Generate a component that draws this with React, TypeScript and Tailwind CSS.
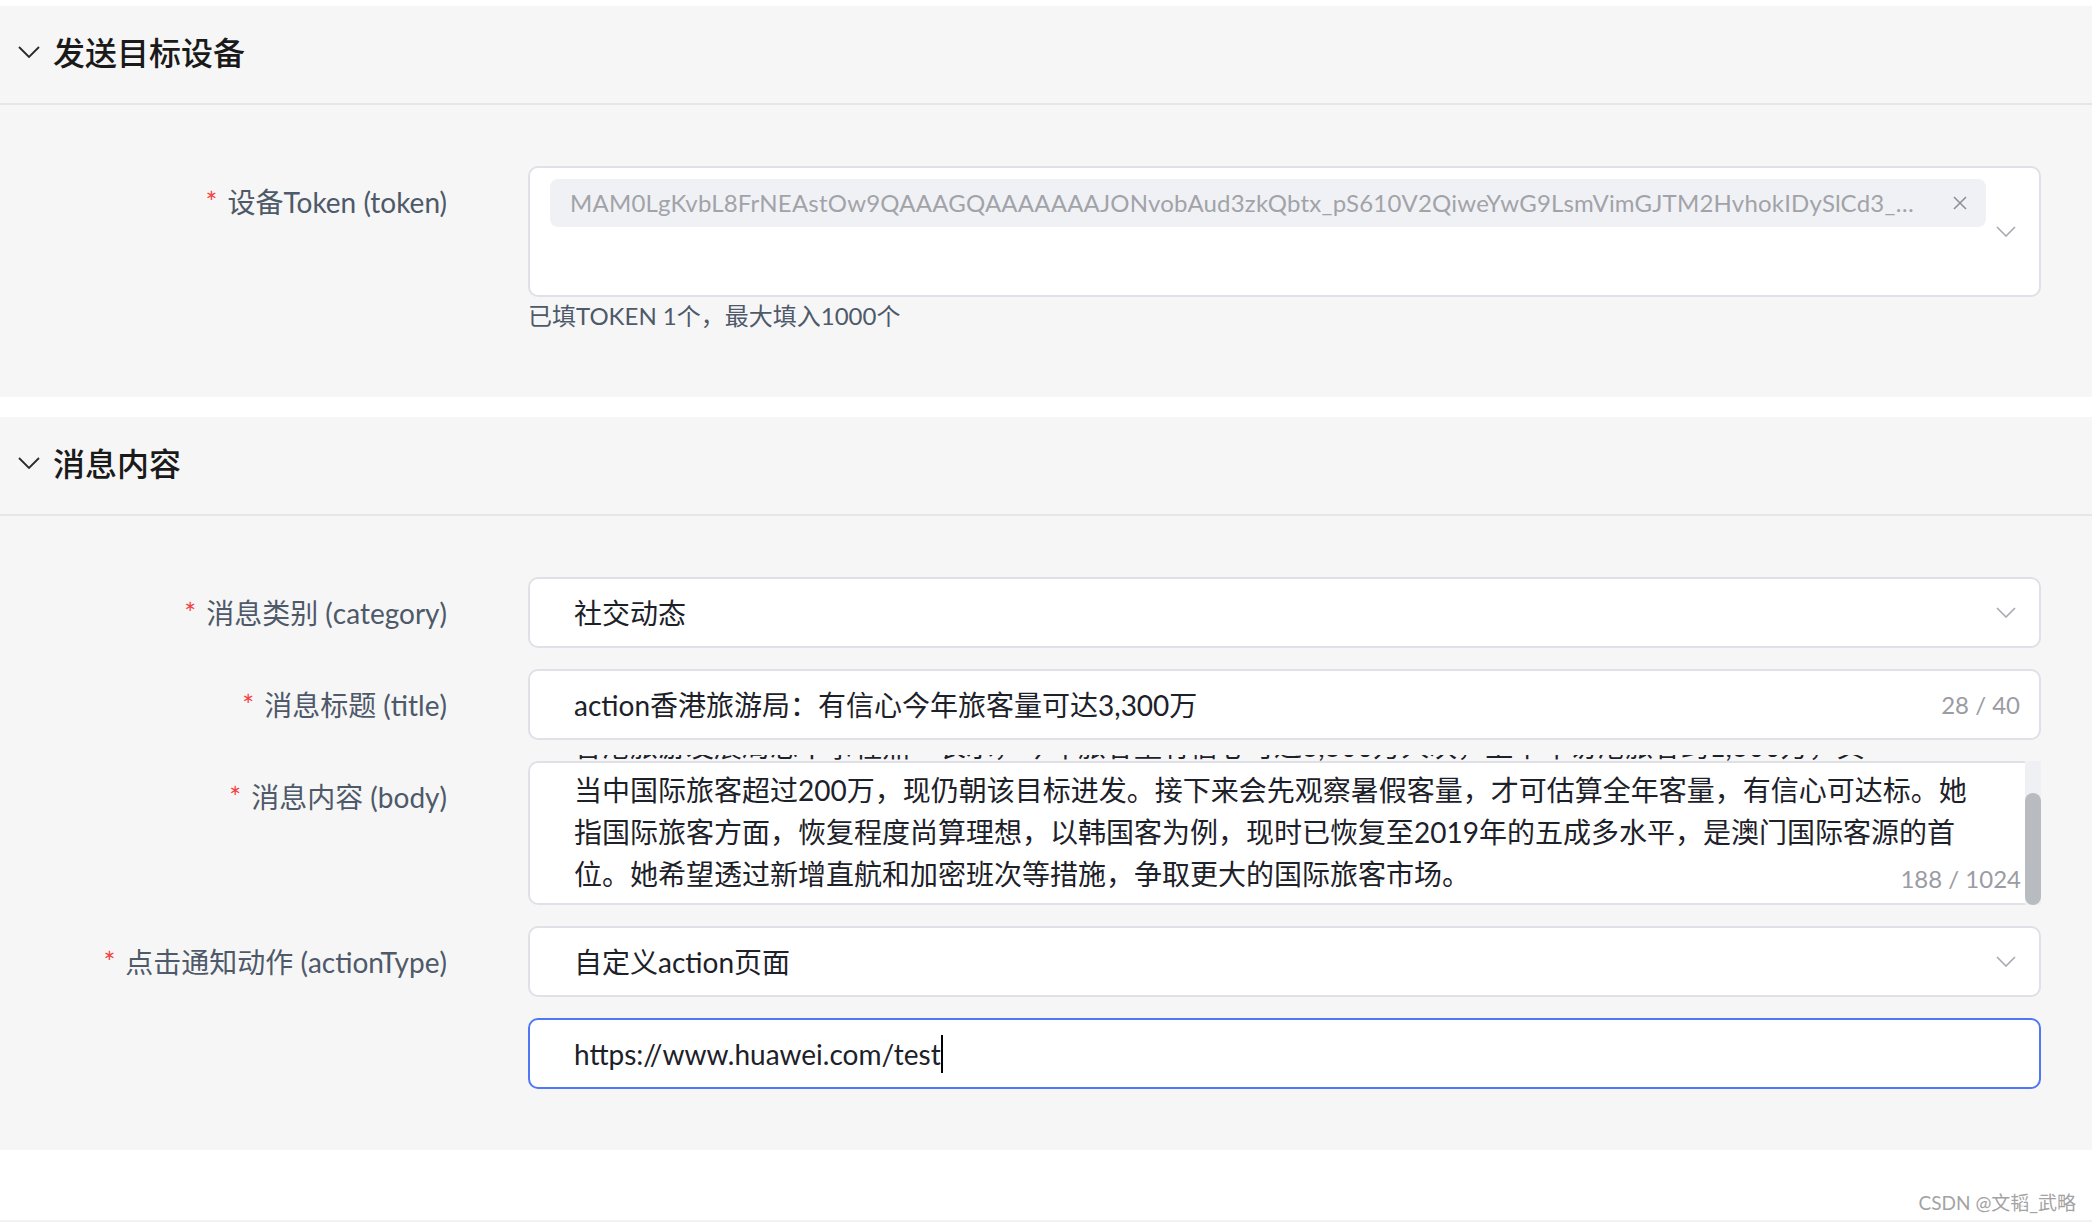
import React from 'react';

const FONT = "font-['Lato','Noto_Sans_CJK_SC',sans-serif]";

const TOKEN =
  'MAM0LgKvbL8FrNEAstOw9QAAAGQAAAAAAAJONvobAud3zkQbtx_pS610V2QiweYwG9LsmVimGJTM2HvhokIDySlCd3_nEoR5wq8TyUhKzP1aXcVb7GmD';

// small down arrow used by selects
const Chevron = ({ className = '' }: { className?: string }) => (
  <svg viewBox="0 0 20 11" className={`w-[20px] h-[11px] shrink-0 ${className}`} fill="none" stroke="currentColor" strokeWidth={1.6}>
    <path d="M1 1l9 9 9-9" />
  </svg>
);

const SectionHeader = ({ title }: { title: string }) => (
  <div className="h-[99px] flex items-center border-b-2 border-[#e6e6e6] bg-[#f6f6f6]">
    <svg viewBox="0 0 22 12" className="w-[22px] h-[12px] ml-[18px] -mt-[6px] text-[#2a2a2a]" fill="none" stroke="currentColor" strokeWidth={1.8}>
      <path d="M1 1l10 10 10-10" />
    </svg>
    <h2 className="ml-[13px] -mt-[4px] text-[32px] font-medium text-[#1a1a1a]">{title}</h2>
  </div>
);

const FormItem = ({ label, children }: { label?: string; children: React.ReactNode }) => (
  <div className="flex items-start">
    <div className="w-[447px] h-[71px] shrink-0 flex items-center justify-end text-[28px] text-[#4e5969]">
      {label && (
        <>
          <span className="text-[#f53f3f] mr-[10px]">*</span>
          {label}
        </>
      )}
    </div>
    <div className="ml-[81px] flex-1 min-w-0">{children}</div>
  </div>
);

const SelectBox = ({ value }: { value: string }) => (
  <div className="h-[71px] rounded-[10px] border-2 border-[#dfe1e6] bg-white flex items-center pl-[44px] pr-[23px]">
    <span className="flex-1 text-[28px] text-[#1d2129]">{value}</span>
    <Chevron className="text-[#a7a9ae]" />
  </div>
);

const BODY_LINES = [
  '香港旅游发展局总干事程鼎一表示，今年旅客量有信心可达3,300万人次，上半年访港旅客约1,300万，其',
  '当中国际旅客超过200万，现仍朝该目标进发。接下来会先观察暑假客量，才可估算全年客量，有信心可达标。她',
  '指国际旅客方面，恢复程度尚算理想，以韩国客为例，现时已恢复至2019年的五成多水平，是澳门国际客源的首',
  '位。她希望透过新增直航和加密班次等措施，争取更大的国际旅客市场。',
];

export default function App() {
  return (
    <div className={`${FONT} w-[2092px] h-[1222px] bg-white flex flex-col overflow-hidden`}>
      <div className="h-[6px]" />

      {/* 发送目标设备 */}
      <SectionHeader title="发送目标设备" />
      <div className="bg-[#f6f6f6] pt-[61px] pb-[65px] pr-[51px]">
        <FormItem label="设备Token (token)">
          <div className="h-[131px] rounded-[10px] border-2 border-[#dfe1e6] bg-white flex pl-[20px] pr-[23px] pt-[11px]">
            <div className="flex-1 min-w-0">
              <div className="h-[48px] bg-[#f0f1f5] rounded-[8px] flex items-center pl-[20px] pr-[18px]">
                <span className="flex-1 min-w-0 truncate text-[24px] tracking-[0.2px] text-[#a2a3a8]">{TOKEN}</span>
                <svg viewBox="0 0 16 16" className="w-[16px] h-[16px] ml-[30px] text-[#8e9096]" fill="none" stroke="currentColor" strokeWidth={1.6}>
                  <path d="M2 2l12 12M14 2L2 14" />
                </svg>
              </div>
            </div>
            <div className="ml-[10px] flex items-center -mt-[11px]">
              <Chevron className="text-[#a7a9ae]" />
            </div>
          </div>
          <p className="mt-[3px] text-[24px] leading-[32px] text-[#4e5969]">已填TOKEN 1个，最大填入1000个</p>
        </FormItem>
      </div>

      <div className="h-[20px]" />

      {/* 消息内容 */}
      <SectionHeader title="消息内容" />
      <div className="bg-[#f6f6f6] pt-[61px] pb-[61px] pr-[51px] flex flex-col gap-[21px]">
        <FormItem label="消息类别 (category)">
          <SelectBox value="社交动态" />
        </FormItem>

        <FormItem label="消息标题 (title)">
          <div className="h-[71px] rounded-[10px] border-2 border-[#dfe1e6] bg-white flex items-center pl-[44px] pr-[19px]">
            <span className="flex-1 text-[28px] text-[#1d2129]">action香港旅游局：有信心今年旅客量可达3,300万</span>
            <span className="text-[24px] text-[#9a9ca3]">28 / 40</span>
          </div>
        </FormItem>

        <FormItem label="消息内容 (body)">
          {/* bottom of the previous line peeks above the box */}
          <div className="h-[6px] -mt-[6px] overflow-hidden pl-[46px]">
            <div className="-mt-[30px] text-[28px] leading-[42px] text-[#1d2129] whitespace-nowrap">{BODY_LINES[0]}</div>
          </div>
          <div className="h-[144px] flex">
            <div className="relative flex-1 min-w-0 rounded-l-[10px] border-2 border-r-0 border-[#dfe1e6] bg-white overflow-hidden pl-[44px] pt-[6px]">
              {BODY_LINES.slice(1).map((l) => (
                <div key={l} className="text-[28px] leading-[42px] text-[#1d2129] whitespace-nowrap">
                  {l}
                </div>
              ))}
              <span className="absolute right-[4px] bottom-[10px] text-[24px] leading-[28px] text-[#9a9ca3]">188 / 1024</span>
            </div>
            <div className="w-[16px] bg-[#eff0f3] pt-[32px] flex">
              <div className="flex-1 rounded-full bg-[#b8bbc0]" />
            </div>
          </div>
        </FormItem>

        <FormItem label="点击通知动作 (actionType)">
          <SelectBox value="自定义action页面" />
        </FormItem>

        <FormItem>
          <div className="h-[71px] rounded-[10px] border-2 border-[#4f77f6] bg-white flex items-center pl-[44px]">
            <span className="text-[28px] text-[#1d2129]">https://www.huawei.com/test</span>
            <span className="w-[2px] h-[38px] bg-black" />
          </div>
        </FormItem>
      </div>

      <div className="flex-1 flex items-end justify-end pr-[16px] pb-[3px]">
        <span className="text-[19px] text-[#a3a3a3]">CSDN @文韬_武略</span>
      </div>
      <div className="h-[2px] bg-[#f2f2f2]" />
    </div>
  );
}
